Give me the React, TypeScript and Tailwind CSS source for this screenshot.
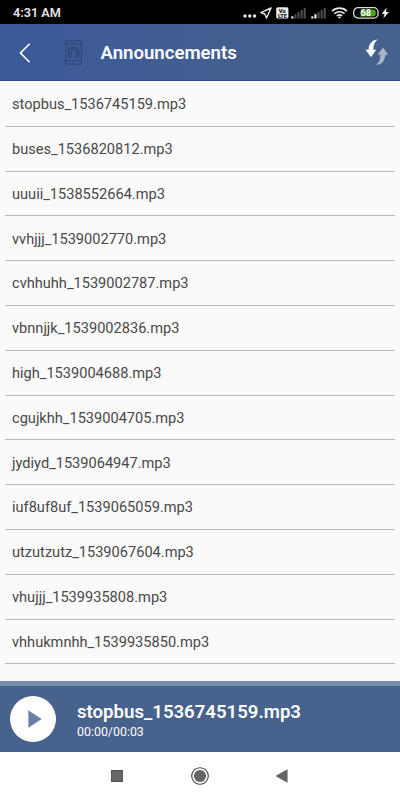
import { useState } from "react";

const tracks = [
  "stopbus_1536745159.mp3",
  "buses_1536820812.mp3",
  "uuuii_1538552664.mp3",
  "vvhjjj_1539002770.mp3",
  "cvhhuhh_1539002787.mp3",
  "vbnnjjk_1539002836.mp3",
  "high_1539004688.mp3",
  "cgujkhh_1539004705.mp3",
  "jydiyd_1539064947.mp3",
  "iuf8uf8uf_1539065059.mp3",
  "utzutzutz_1539067604.mp3",
  "vhujjj_1539935808.mp3",
  "vhhukmnhh_1539935850.mp3",
];

function Signal({ level, className }: { level: number; className: string }) {
  return (
    <svg className={className} width="16" height="12" viewBox="0 0 16 12">
      {[0, 1, 2, 3, 4].map((i) => (
        <rect
          key={i}
          x={0.3 + i * 3.1}
          y={9.3 - i * 2.1}
          width="2.1"
          height={2.2 + i * 2.1}
          fill={i < level ? "#f0f0f0" : "#4c4c4c"}
        />
      ))}
    </svg>
  );
}

function StatusBar() {
  return (
    <div className="flex h-6 shrink-0 items-center bg-black pl-[13px] pr-[9px] text-[#e4e4e4]">
      <span className="mt-[2px] text-[12.7px] font-semibold leading-none">4:31 AM</span>
      <div className="ml-auto flex items-center pt-[2px]">
        <svg className="mt-[5px]" width="14" height="4" viewBox="0 0 14 4" fill="#e8e8e8">
          <circle cx="2" cy="2" r="1.7" />
          <circle cx="6.8" cy="2" r="1.7" />
          <circle cx="11.6" cy="2" r="1.7" />
        </svg>
        <svg className="ml-[3px]" width="12" height="12" viewBox="0 0 12 12" fill="none" stroke="#e8e8e8" strokeWidth="1.4" strokeLinejoin="round">
          <path d="M11 1 0.9 5.7 4.8 7 6.5 11Z" />
        </svg>
        <svg className="ml-[4px]" width="13" height="12" viewBox="0 0 13 12">
          <rect x="0.2" y="0.2" width="12.2" height="11.4" rx="1.6" fill="#ececec" />
          <text x="6.3" y="5.6" textAnchor="middle" fontSize="5.8" fontWeight="900" fill="#111">Vo</text>
          <text x="6.3" y="10.8" textAnchor="middle" fontSize="5.3" fontWeight="900" fill="#111">LTE</text>
        </svg>
        <Signal level={1} className="ml-[2px]" />
        <Signal level={2} className="ml-[4px]" />
        <svg className="ml-[4px] mr-px" width="17" height="12" viewBox="0 0 17 12" fill="none" stroke="#e8e8e8" strokeWidth="1.6">
          <path d="M1 4.2C5.2.1 11.8.1 16 4.2" />
          <path d="M3.4 6.7c2.9-2.7 7.3-2.7 10.2 0" />
          <path d="M5.8 9c1.6-1.4 3.8-1.4 5.4 0" />
          <path d="M8.5 11.8 6.9 10c.9-.8 2.3-.8 3.2 0Z" fill="#e8e8e8" stroke="none" />
        </svg>
        <svg className="ml-[4px]" width="26" height="12" viewBox="0 0 26 12">
          <rect x="0.7" y="0.7" width="24.4" height="10.4" rx="4.4" fill="#000" stroke="#dcdcdc" strokeWidth="1.3" />
          <path d="M7.5 2.4h12.3a3 3 0 0 1 3 3v1a3 3 0 0 1-3 3H7.5Z" fill="#48a51d" />
          <text x="12.8" y="9.2" textAnchor="middle" fontSize="9.2" fontWeight="700" fill="#fff">68</text>
        </svg>
        <svg className="ml-[2px] mr-px" width="9" height="12" viewBox="0 0 9 12" fill="#f0f0f0">
          <path d="M5.6.6.8 6.9h2.7l-1.1 4.4L8 4.9H5Z" />
        </svg>
      </div>
    </div>
  );
}

function Header() {
  return (
    <header className="flex h-[57px] shrink-0 items-center border-b border-[#2e4d85] bg-linear-to-r from-[#3b5998] to-[#47628c] pt-px text-white">
      <button type="button" aria-label="Back" className="ml-[19px]">
        <svg width="12" height="20" viewBox="0 0 12 20" fill="none" stroke="currentColor" strokeWidth="1.6">
          <path d="M10.6.8 1.5 10l9.1 9.2" />
        </svg>
      </button>
      <svg className="ml-[34px] opacity-75" width="17" height="25" viewBox="0 0 17 25" fill="none" stroke="#2c4169" strokeWidth="1">
        <rect x="0.7" y="0.7" width="15.6" height="23.6" rx="0.8" />
        <path d="M1 4.2h15M1 20.5h15M6 2.5h5M7.5 22.5h2" />
        <path d="M4.6 16.5C2.2 13 3 7.6 8.5 7.6S14.8 13 12.4 16.5" strokeWidth="1.9" />
        <path d="M6.2 15V11.5Q8.5 9 10.8 11.5V15M3.8 16.8H7M10 16.8H13.2" strokeWidth="1.2" />
      </svg>
      <h1 className="ml-[18.5px] pt-[3px] text-[18.6px] font-semibold">Announcements</h1>
      <button type="button" aria-label="Refresh" className="ml-auto mr-[11px]">
        <svg width="24" height="27" viewBox="0 0 24 27">
          <path d="M12.8.5C7.3.7 3.9 4.6 3.5 10.8H.6L6 18.3 11.2 10.8H8.4C8.2 6.5 9.4 3 12.8.5Z" fill="#fff" />
          <path d="M11 26C16.5 25.8 19.9 21.9 20.3 15.7H23.3L18 8.6 12.6 15.7H15.4C15.6 20 14.4 23.5 11 26Z" fill="#a9b6c8" />
        </svg>
      </button>
    </header>
  );
}

export default function App() {
  const [current, setCurrent] = useState(tracks[0]);

  return (
    <div className="flex h-[800px] w-[400px] flex-col overflow-hidden bg-white font-[Roboto,sans-serif]">
      <StatusBar />
      <Header />

      <ul className="min-h-0 flex-1 overflow-hidden bg-[#fafafa] px-[5px] pt-px">
        {tracks.map((track) => (
          <li
            key={track}
            onClick={() => setCurrent(track)}
            className="flex h-[44.8px] items-center border-b border-[#b3b8bc] pl-[7px] pt-[2.4px] text-[14.6px] text-[#484848]"
          >
            {track}
          </li>
        ))}
      </ul>

      {/* Player */}
      <div className="h-[5px] shrink-0 bg-[#768aab]" />
      <div className="flex h-[66px] shrink-0 items-center bg-[#47628c] pl-[10px] text-white">
        <button type="button" aria-label="Play" className="flex size-[46px] items-center justify-center rounded-full bg-white">
          <svg className="ml-[3px]" width="14" height="18" viewBox="0 0 14 18" fill="#6b80a6">
            <path d="M.3.3 13.7 9 .3 17.7Z" />
          </svg>
        </button>
        <div className="ml-[21px] pt-[5px]">
          <p className="text-[18.6px] font-semibold leading-[21px]">{current}</p>
          <p className="text-[12.4px] leading-[18px]">00:00/00:03</p>
        </div>
      </div>

      {/* System navigation */}
      <nav className="flex h-12 shrink-0 items-center pl-[111px]">
        <div className="size-3 border border-[#555] bg-[#666]" />
        <svg className="ml-[68px]" width="18" height="18" viewBox="0 0 18 18">
          <circle cx="9" cy="9" r="8.3" fill="none" stroke="#444" strokeWidth="1.1" />
          <circle cx="9" cy="9" r="6.1" fill="#666" />
        </svg>
        <svg className="ml-[66px]" width="13" height="14" viewBox="0 0 13 14">
          <path d="M12.2.8V13.2L1 7Z" fill="#666" stroke="#555" strokeWidth="0.6" />
        </svg>
      </nav>
    </div>
  );
}
